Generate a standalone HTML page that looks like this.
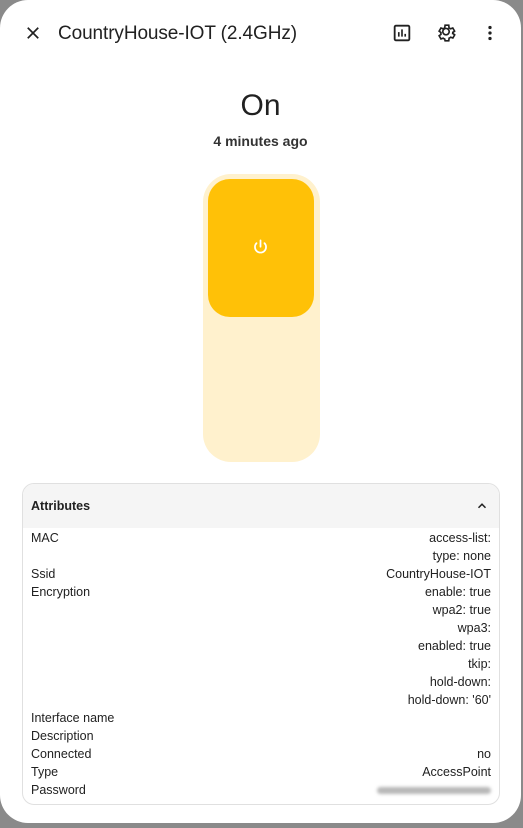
<!DOCTYPE html><html><head><style>
body{margin:0;width:523px;height:828px;background:#8a8a8a;font-family:"Liberation Sans",sans-serif;overflow:hidden;position:relative}
.dlg{position:absolute;left:0;top:0;width:521px;height:823px;background:#fff;border-radius:28px;}
.t{position:absolute;color:#212121}
.row{display:flex;justify-content:space-between;height:18px;line-height:18px;font-size:12.5px;color:#212121;padding:0 8px}
</style></head><body><div class="dlg">
<svg class="t" style="left:24px;top:24px" width="18" height="18" viewBox="0 0 24 24"><path d="M5 5L19 19M19 5L5 19" stroke="#212121" stroke-width="2.2"/></svg>
<div class="t" style="left:58px;top:23px;font-size:19px;letter-spacing:-0.1px">CountryHouse-IOT (2.4GHz)</div>
<svg class="t" style="left:391px;top:22px" width="22" height="22" viewBox="0 0 24 24"><rect x="4" y="4" width="16" height="16" rx="1.5" fill="none" stroke="#212121" stroke-width="2"/><path d="M8.5 16V11M12 16V8M15.5 16V13" stroke="#212121" stroke-width="1.8"/></svg>
<svg class="t" style="left:435px;top:22px" width="22" height="22" viewBox="0 0 24 24"><path d="M12 15.5A3.5 3.5 0 1 1 12 8.5A3.5 3.5 0 0 1 12 15.5ZM19.4 13l2-1.5-2-3.5-2.4.9a7 7 0 0 0-1.7-1L15 5h-4l-.4 2.9a7 7 0 0 0-1.7 1L6.5 8l-2 3.5 2 1.5a7 7 0 0 0 0 2l-2 1.5 2 3.5 2.4-.9a7 7 0 0 0 1.7 1L11 22h4l.4-2.9a7 7 0 0 0 1.7-1l2.4.9 2-3.5-2-1.5a7 7 0 0 0 0-2Z" transform="translate(0,-1.5)" fill="none" stroke="#212121" stroke-width="1.8"/></svg>
<svg class="t" style="left:479px;top:22px" width="22" height="22" viewBox="0 0 24 24"><circle cx="12" cy="6" r="1.8" fill="#212121"/><circle cx="12" cy="12" r="1.8" fill="#212121"/><circle cx="12" cy="18" r="1.8" fill="#212121"/></svg>
<div class="t" style="left:0;width:521px;text-align:center;top:89px;font-size:30px">On</div>
<div class="t" style="left:0;width:521px;text-align:center;top:133px;font-size:14px;font-weight:bold;color:#333">4 minutes ago</div>
<div style="position:absolute;left:203px;top:174px;width:117px;height:288px;background:#fff1cd;border-radius:28px"></div>
<div style="position:absolute;left:208px;top:179px;width:106px;height:138px;background:#ffc107;border-radius:22px"></div>
<svg class="t" style="left:251px;top:238px" width="19" height="19" viewBox="0 0 24 24"><path d="M12 3v8M7 6.5a7 7 0 1 0 10 0" fill="none" stroke="#fff" stroke-width="2.2" stroke-linecap="round"/></svg>
<div style="position:absolute;left:22px;top:483px;width:476px;height:320px;border:1px solid #e0e0e0;border-radius:12px;overflow:hidden">
<div style="height:44px;background:#f5f5f5;position:relative"><div style="position:absolute;left:8px;top:15px;font-size:12.5px;font-weight:bold;color:#212121">Attributes</div>
<svg style="position:absolute;right:10px;top:15px" width="14" height="14" viewBox="0 0 24 24"><path d="M6 15l6-6 6 6" fill="none" stroke="#212121" stroke-width="2.6"/></svg></div>
<div style="height:1px"></div>
<div class="row"><span>MAC</span><span>access-list:</span></div>
<div class="row"><span></span><span>type: none</span></div>
<div class="row"><span>Ssid</span><span>CountryHouse-IOT</span></div>
<div class="row"><span>Encryption</span><span>enable: true</span></div>
<div class="row"><span></span><span>wpa2: true</span></div>
<div class="row"><span></span><span>wpa3:</span></div>
<div class="row"><span></span><span>enabled: true</span></div>
<div class="row"><span></span><span>tkip:</span></div>
<div class="row"><span></span><span>hold-down:</span></div>
<div class="row"><span></span><span>hold-down: '60'</span></div>
<div class="row"><span>Interface name</span><span></span></div>
<div class="row"><span>Description</span><span></span></div>
<div class="row"><span>Connected</span><span>no</span></div>
<div class="row"><span>Type</span><span>AccessPoint</span></div>
<div class="row"><span>Password</span><span style="display:inline-block;width:114px;height:7px;margin-top:6px;background:#b8b8b8;border-radius:4px;filter:blur(1.5px)"></span></div>
</div>
</div></body></html>
